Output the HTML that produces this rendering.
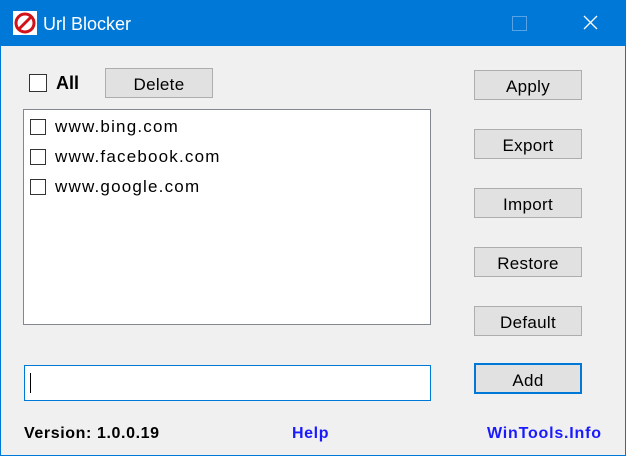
<!DOCTYPE html>
<html><head><style>
body{margin:0;width:626px;height:456px;overflow:hidden;font-family:"Liberation Sans",sans-serif;}
.win{position:absolute;left:0;top:0;width:624px;height:455px;border:1px solid #0078d7;border-top:none;background:#f0f0f0;}
.tb{position:absolute;left:0;top:0;width:626px;height:46px;background:#0078d7;}
.a{position:absolute;}
.btn{position:absolute;width:106px;height:28px;background:#e1e1e1;border:1px solid #adadad;font-size:17px;color:#000;text-align:center;line-height:32px;box-sizing:content-box;letter-spacing:0.3px}
.cb{position:absolute;width:14px;height:14px;border:1px solid #333;background:#fff;}
.it{position:absolute;left:31px;font-size:17px;color:#000;letter-spacing:1.2px}
</style></head><body>
<div class="win"></div>
<div class="tb">
 <svg class="a" style="left:13px;top:11px" width="24" height="24" viewBox="0 0 24 24"><rect width="24" height="24" fill="#fff"/><circle cx="12" cy="12" r="9" fill="none" stroke="#d0121b" stroke-width="3"/><line x1="6" y1="18" x2="18" y2="6" stroke="#d0121b" stroke-width="3"/></svg>
 <div class="a" style="left:43px;top:14px;color:#fff;font-size:18px">Url Blocker</div>
 <div class="a" style="left:512px;top:16px;width:13px;height:13px;border:1px solid #5aa2e6"></div>
 <svg class="a" style="left:583px;top:15px" width="15" height="15"><path d="M1 1L14 14M14 1L1 14" stroke="#fff" stroke-width="1.3"/></svg>
</div>
<div class="cb" style="left:29px;top:74px;width:16px;height:16px"></div>
<div class="a" style="left:56px;top:73px;font-size:18px;font-weight:bold">All</div>
<div class="btn" style="left:105px;top:68px">Delete</div>
<div class="a" style="left:23px;top:109px;width:406px;height:214px;background:#fff;border:1px solid #828790">
 <div class="cb" style="left:6px;top:9px"></div><div class="it" style="top:7px">www.bing.com</div>
 <div class="cb" style="left:6px;top:39px"></div><div class="it" style="top:37px">www.facebook.com</div>
 <div class="cb" style="left:6px;top:69px"></div><div class="it" style="top:67px">www.google.com</div>
</div>
<div class="btn" style="left:474px;top:70px">Apply</div>
<div class="btn" style="left:474px;top:129px">Export</div>
<div class="btn" style="left:474px;top:188px">Import</div>
<div class="btn" style="left:474px;top:247px">Restore</div>
<div class="btn" style="left:474px;top:306px">Default</div>
<div class="btn" style="left:474px;top:363px;width:104px;height:27px;border:2px solid #0078d7">Add</div>
<div class="a" style="left:24px;top:365px;width:405px;height:34px;background:#fff;border:1px solid #0078d7"><div class="a" style="left:5px;top:7px;width:1px;height:20px;background:#000"></div></div>
<div class="a" style="left:24px;top:425px;font-size:16px;font-weight:bold;color:#000;letter-spacing:0.6px">Version: 1.0.0.19</div>
<div class="a" style="left:292px;top:425px;font-size:16px;font-weight:bold;color:#1a1aff;letter-spacing:0.6px">Help</div>
<div class="a" style="left:487px;top:425px;font-size:16px;font-weight:bold;color:#1a1aff;letter-spacing:0.8px">WinTools.Info</div>
</body></html>
